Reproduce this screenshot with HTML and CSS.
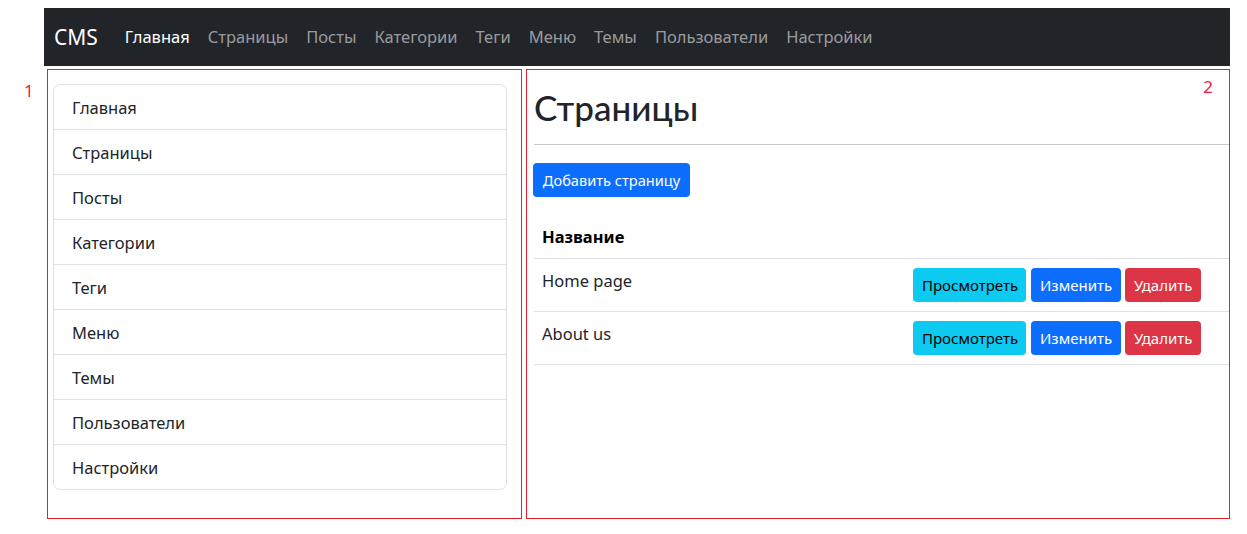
FILE: index.html
```html
<!DOCTYPE html>
<html lang="ru">
<head>
<meta charset="utf-8">
<title>CMS</title>
<link rel="stylesheet" href="styles.css">
</head>
<body>
<div class="page">
  <nav class="topbar">
    <a class="brand" href="#">CMS</a>
    <ul class="nav-links">
      <li><a class="active" href="#">Главная</a></li>
      <li><a href="#">Страницы</a></li>
      <li><a href="#">Посты</a></li>
      <li><a href="#">Категории</a></li>
      <li><a href="#">Теги</a></li>
      <li><a href="#">Меню</a></li>
      <li><a href="#">Темы</a></li>
      <li><a href="#">Пользователи</a></li>
      <li><a href="#">Настройки</a></li>
    </ul>
  </nav>
  <div class="row">
    <aside class="col col-side">
      <span class="marker marker-left">1</span>
      <ul class="list-group">
        <li>Главная</li>
        <li>Страницы</li>
        <li>Посты</li>
        <li>Категории</li>
        <li>Теги</li>
        <li>Меню</li>
        <li>Темы</li>
        <li>Пользователи</li>
        <li>Настройки</li>
      </ul>
    </aside>
    <main class="col col-main">
      <span class="marker marker-right">2</span>
      <h1 class="title">Страницы</h1>
      <hr class="divider">
      <button class="btn btn-primary btn-add">Добавить страницу</button>
      <table class="table">
        <thead>
          <tr><th>Название</th><th class="actions"></th></tr>
        </thead>
        <tbody>
          <tr>
            <td>Home page</td>
            <td class="actions"><div class="btns"><button class="btn btn-info">Просмотреть</button><button class="btn btn-primary">Изменить</button><button class="btn btn-danger">Удалить</button></div></td>
          </tr>
          <tr>
            <td>About us</td>
            <td class="actions"><div class="btns"><button class="btn btn-info">Просмотреть</button><button class="btn btn-primary">Изменить</button><button class="btn btn-danger">Удалить</button></div></td>
          </tr>
        </tbody>
      </table>
    </main>
  </div>
</div>
</body>
</html>
```
FILE: styles.css
```css
* { box-sizing: border-box; }
html, body { margin: 0; padding: 0; background: #fff; }
body {
  font-family: "Noto Sans", "Open Sans", Arial, sans-serif;
  font-size: 16.5px;
  color: #212529;
}
.page {
  padding: 8px 0 0 44px;
  width: 1230px;
}
.topbar {
  height: 58px;
  background: #212529;
  display: flex;
  align-items: center;
  padding-left: 10px;
  padding-bottom: 1px;
}
.brand {
  color: #fff;
  text-decoration: none;
  font-size: 21px;
  margin-right: 27px;
}
.nav-links {
  list-style: none;
  margin: 0;
  padding: 0;
  display: flex;
  gap: 18px;
}
.nav-links a {
  color: rgba(255,255,255,.55);
  text-decoration: none;
  font-size: 16.5px;
}
.nav-links a.active { color: #fff; }

.row {
  display: flex;
  margin-top: 3px;
  margin-left: 3px;
  gap: 4px;
}
.col {
  position: relative;
  border: 1px solid #e81e2a;
  height: 450px;
}
.col-side { width: 475px; padding: 14px 14px 0 5px; }
.col-main { width: 704px; padding: 0 0 0 7px; }
.marker {
  position: absolute;
  color: #f0203c;
  font-size: 17px;
  line-height: 1;
}
.marker-left { left: -24px; top: 12px; }
.marker-right { right: 16px; top: 8px; }

.list-group {
  list-style: none;
  margin: 0;
  padding: 0;
  border: 1px solid #dee2e6;
  border-radius: 7px;
}
.list-group li {
  height: 45px;
  line-height: 44px;
  padding: 1px 18px 0;
  border-top: 1px solid #dee2e6;
}
.list-group li:first-child { border-top: 0; height: 44px; }

.title {
  font-family: Lato, "Noto Sans", sans-serif;
  font-size: 35px;
  font-weight: 500;
  line-height: 48px;
  margin: 13px 0 0 0;
}
.divider {
  border: 0;
  border-top: 1px solid #c8c8c8;
  margin: 13px 0 18px 0;
}
.btn {
  font-family: inherit;
  font-size: 15px;
  height: 34px;
  padding: 0 9px;
  border: 0;
  border-radius: 4px;
  cursor: pointer;
}
.btn-primary { background: #0d6efd; color: #fff; }
.btn-info { background: #0dcaf0; color: #000; }
.btn-danger { background: #dc3545; color: #fff; }
.btn-add { padding: 0 9px; display: block; font-size: 14.6px; width: 157px; margin-left: -1px; }

.table {
  width: 100%;
  border-collapse: collapse;
  margin-top: 17px;
}
.table th, .table td {
  text-align: left;
  vertical-align: top;
  padding: 9px 8px;
  line-height: 26px;
  border-bottom: 1px solid #dee2e6;
}
.table th { font-weight: 700; color: #000; padding-top: 10px; padding-bottom: 8px; }
.table td.actions, .table th.actions { width: 324px; }
.btns { display: flex; gap: 4px; }
.btns .btn-info { width: 113px; }
.btns .btn-primary { width: 90px; margin-left: 1px; }
.btns .btn-danger { width: 76px; }
```
